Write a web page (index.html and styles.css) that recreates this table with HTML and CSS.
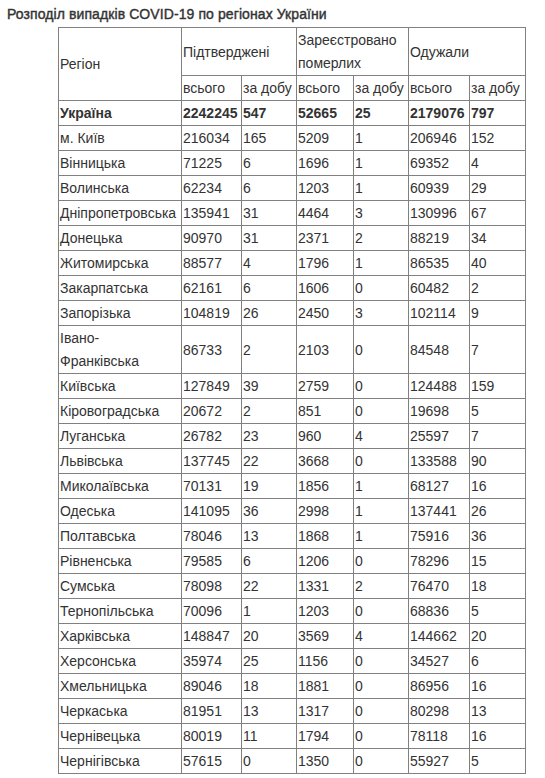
FILE: index.html
```html
<!DOCTYPE html>
<html lang="uk">
<head>
<meta charset="utf-8">
<link rel="stylesheet" href="styles.css">
</head>
<body>
<div class="title">Розподіл випадків COVID-19 по регіонах України</div>
<table class="stats">
<colgroup>
<col class="c-region"><col class="c1"><col class="c2"><col class="c3"><col class="c4"><col class="c5"><col class="c6">
</colgroup>
<thead>
<tr><th rowspan="2">Регіон</th><th colspan="2">Підтверджені</th><th colspan="2">Зареєстровано померлих</th><th colspan="2">Одужали</th></tr>
<tr><th>всього</th><th>за добу</th><th>всього</th><th>за добу</th><th>всього</th><th>за добу</th></tr>
</thead>
<tbody>
<tr class="total"><td>Україна</td><td>2242245</td><td>547</td><td>52665</td><td>25</td><td>2179076</td><td>797</td></tr>
<tr><td>м. Київ</td><td>216034</td><td>165</td><td>5209</td><td>1</td><td>206946</td><td>152</td></tr>
<tr><td>Вінницька</td><td>71225</td><td>6</td><td>1696</td><td>1</td><td>69352</td><td>4</td></tr>
<tr><td>Волинська</td><td>62234</td><td>6</td><td>1203</td><td>1</td><td>60939</td><td>29</td></tr>
<tr><td>Дніпропетровська</td><td>135941</td><td>31</td><td>4464</td><td>3</td><td>130996</td><td>67</td></tr>
<tr><td>Донецька</td><td>90970</td><td>31</td><td>2371</td><td>2</td><td>88219</td><td>34</td></tr>
<tr><td>Житомирська</td><td>88577</td><td>4</td><td>1796</td><td>1</td><td>86535</td><td>40</td></tr>
<tr><td>Закарпатська</td><td>62161</td><td>6</td><td>1606</td><td>0</td><td>60482</td><td>2</td></tr>
<tr><td>Запорізька</td><td>104819</td><td>26</td><td>2450</td><td>3</td><td>102114</td><td>9</td></tr>
<tr><td>Івано-<br>Франківська</td><td>86733</td><td>2</td><td>2103</td><td>0</td><td>84548</td><td>7</td></tr>
<tr><td>Київська</td><td>127849</td><td>39</td><td>2759</td><td>0</td><td>124488</td><td>159</td></tr>
<tr><td>Кіровоградська</td><td>20672</td><td>2</td><td>851</td><td>0</td><td>19698</td><td>5</td></tr>
<tr><td>Луганська</td><td>26782</td><td>23</td><td>960</td><td>4</td><td>25597</td><td>7</td></tr>
<tr><td>Львівська</td><td>137745</td><td>22</td><td>3668</td><td>0</td><td>133588</td><td>90</td></tr>
<tr><td>Миколаївська</td><td>70131</td><td>19</td><td>1856</td><td>1</td><td>68127</td><td>16</td></tr>
<tr><td>Одеська</td><td>141095</td><td>36</td><td>2998</td><td>1</td><td>137441</td><td>26</td></tr>
<tr><td>Полтавська</td><td>78046</td><td>13</td><td>1868</td><td>1</td><td>75916</td><td>36</td></tr>
<tr><td>Рівненська</td><td>79585</td><td>6</td><td>1206</td><td>0</td><td>78296</td><td>15</td></tr>
<tr><td>Сумська</td><td>78098</td><td>22</td><td>1331</td><td>2</td><td>76470</td><td>18</td></tr>
<tr><td>Тернопільська</td><td>70096</td><td>1</td><td>1203</td><td>0</td><td>68836</td><td>5</td></tr>
<tr><td>Харківська</td><td>148847</td><td>20</td><td>3569</td><td>4</td><td>144662</td><td>20</td></tr>
<tr><td>Херсонська</td><td>35974</td><td>25</td><td>1156</td><td>0</td><td>34527</td><td>6</td></tr>
<tr><td>Хмельницька</td><td>89046</td><td>18</td><td>1881</td><td>0</td><td>86956</td><td>16</td></tr>
<tr><td>Черкаська</td><td>81951</td><td>13</td><td>1317</td><td>0</td><td>80298</td><td>13</td></tr>
<tr><td>Чернівецька</td><td>80019</td><td>11</td><td>1794</td><td>0</td><td>78118</td><td>16</td></tr>
<tr><td>Чернігівська</td><td>57615</td><td>0</td><td>1350</td><td>0</td><td>55927</td><td>5</td></tr>
</tbody>
</table>
</body>
</html>
```

FILE: styles.css
```css
html, body {
  margin: 0;
  padding: 0;
  background: #ffffff;
}
body {
  font-family: "Liberation Sans", Arial, sans-serif;
  color: #333333;
  font-size: 14px;
}
.title {
  font-size: 14px;
  font-weight: normal;
  -webkit-text-stroke: 0.4px #333333;
  letter-spacing: 0.09px;
  line-height: 16px;
  padding: 6px 0 0 7px;
  margin-bottom: 5px;
  color: #333333;
}
.stats {
  border-collapse: collapse;
  table-layout: fixed;
  width: 467px;
  margin-left: 58px;
}
.c-region { width: 123px; }
.c1 { width: 60px; }
.c2 { width: 55px; }
.c3 { width: 57px; }
.c4 { width: 55px; }
.c5 { width: 61px; }
.c6 { width: 56px; }
.stats th,
.stats td {
  border: 1px solid #808080;
  font-weight: normal;
  text-align: left;
  vertical-align: middle;
  line-height: 23px;
  padding: 1px 0 0 1px;
  font-size: 14px;
}
.stats .total td {
  font-weight: bold;
}
```
